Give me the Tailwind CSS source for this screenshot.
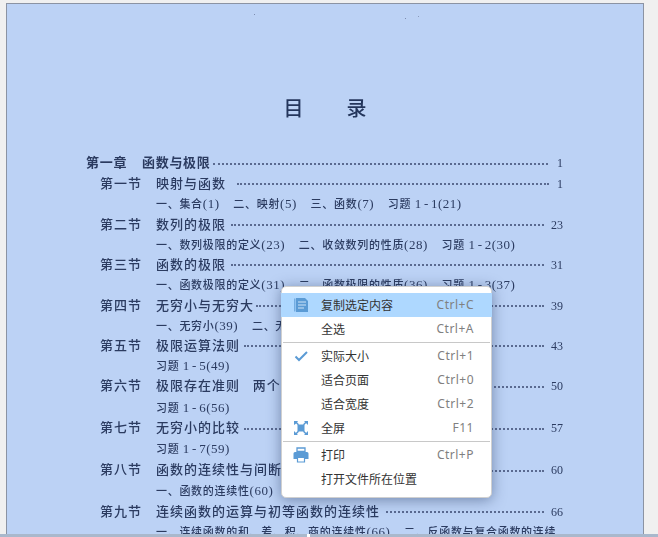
<!DOCTYPE html>
<html lang="zh">
<head>
    <meta charset="UTF-8">
    <title>目录</title>
    <script src="https://cdn.jsdelivr.net/npm/@tailwindcss/browser@4"></script>
</head>
<body class="bg-[#f0f0f0] w-[658px] h-[537px] overflow-hidden relative font-['Liberation_Serif','Noto_Sans_CJK_SC',serif]">
    <!-- scanned page -->
    <div class="ml-[6px] mt-[3px] w-[638px] h-[531px] bg-[#bcd2f5] border-l border-t border-r border-[#8b93a3] overflow-hidden text-[#2b3b60] relative">
        <span class="absolute left-[247px] top-[10px] w-px h-px bg-[#7d8db0]"></span>
        <span class="absolute left-[398px] top-[14px] w-px h-px bg-[#7d8db0]"></span>
        <span class="absolute left-[411px] top-[12px] w-px h-px bg-[#8a9abb]"></span>

        <div class="blur-[0.35px]">
            <div class="flex justify-center gap-[43px] pt-[91px] h-[149px] text-[20px] leading-[28px] font-medium text-[#24365c]">
                <span>目</span>
                <span>录</span>
            </div>

            <div class="pl-[79px] pr-[80px] text-[13px] leading-[20px] tracking-[1px] font-medium">
                <div class="flex h-[21px]"><span class="w-[56px] font-bold tracking-[0.7px]">第一章</span><span class="font-bold tracking-[0.7px]">函数与极限</span><i class="flex-1 self-center ml-[2px] mr-[9px] border-t-2 border-dotted border-[#5a6a90]"></i><span class="w-[6px] text-[12px]">1</span></div>

                <div class="flex h-[20px] pl-[14px]"><span class="w-[56px]">第一节</span><span>映射与函数</span><i class="flex-1 self-center ml-[11px] mr-[8px] border-t-2 border-dotted border-[#5a6a90]"></i><span class="w-[6px] text-[12px]">1</span></div>
                <div class="h-[21px] pl-[70px] text-[11px] tracking-[0.7px]">一、集合<span class="text-[13px] tracking-[0.5px]">(1)</span>&nbsp;&nbsp;&nbsp;&nbsp;二、映射<span class="text-[13px] tracking-[0.5px]">(5)</span>&nbsp;&nbsp;&nbsp;&nbsp;三、函数<span class="text-[13px] tracking-[0.5px]">(7)</span>&nbsp;&nbsp;&nbsp;&nbsp;习题 <span class="text-[13px] tracking-[0.5px] [word-spacing:-1.5px]">1 - 1(21)</span></div>

                <div class="flex h-[20px] pl-[14px]"><span class="w-[56px]">第二节</span><span>数列的极限</span><i class="flex-1 self-center ml-[5px] mr-[7px] border-t-2 border-dotted border-[#5a6a90]"></i><span class="w-[12px] text-[12px] tracking-normal">23</span></div>
                <div class="h-[20px] pl-[70px] text-[11px] tracking-[0.7px]">一、数列极限的定义<span class="text-[13px] tracking-[0.5px]">(23)</span>&nbsp;&nbsp;&nbsp;&nbsp;二、收敛数列的性质<span class="text-[13px] tracking-[0.5px]">(28)</span>&nbsp;&nbsp;&nbsp;&nbsp;习题 <span class="text-[13px] tracking-[0.5px] [word-spacing:-1.5px]">1 - 2(30)</span></div>

                <div class="flex h-[20px] pl-[14px]"><span class="w-[56px]">第三节</span><span>函数的极限</span><i class="flex-1 self-center ml-[5px] mr-[7px] border-t-2 border-dotted border-[#5a6a90]"></i><span class="w-[12px] text-[12px] tracking-normal">31</span></div>
                <div class="h-[21px] pl-[70px] text-[11px] tracking-[0.7px]">一、函数极限的定义<span class="text-[13px] tracking-[0.5px]">(31)</span>&nbsp;&nbsp;&nbsp;&nbsp;二、函数极限的性质<span class="text-[13px] tracking-[0.5px]">(36)</span>&nbsp;&nbsp;&nbsp;&nbsp;习题 <span class="text-[13px] tracking-[0.5px] [word-spacing:-1.5px]">1 - 3(37)</span></div>

                <div class="flex h-[20px] pl-[14px]"><span class="w-[56px]">第四节</span><span>无穷小与无穷大</span><i class="flex-1 self-center ml-[2px] mr-[7px] border-t-2 border-dotted border-[#5a6a90]"></i><span class="w-[12px] text-[12px] tracking-normal">39</span></div>
                <div class="h-[20px] pl-[70px] text-[11px] tracking-[0.7px]">一、无穷小<span class="text-[13px] tracking-[0.5px]">(39)</span>&nbsp;&nbsp;&nbsp;&nbsp;二、无穷大<span class="text-[13px] tracking-[0.5px]">(41)</span></div>

                <div class="flex h-[20px] pl-[14px]"><span class="w-[56px]">第五节</span><span>极限运算法则</span><i class="flex-1 self-center ml-[4px] mr-[7px] border-t-2 border-dotted border-[#5a6a90]"></i><span class="w-[12px] text-[12px] tracking-normal">43</span></div>
                <div class="h-[20px] pl-[70px] text-[11px] tracking-[0.7px]">习题 <span class="text-[13px] tracking-[0.5px] [word-spacing:-1.5px]">1 - 5(49)</span></div>

                <div class="flex h-[22px] pl-[14px]"><span class="w-[56px]">第六节</span><span>极限存在准则&nbsp;&nbsp;&nbsp;两个重要极限</span><i class="flex-1 self-center ml-[4px] mr-[7px] border-t-2 border-dotted border-[#5a6a90]"></i><span class="w-[12px] text-[12px] tracking-normal">50</span></div>
                <div class="h-[20px] pl-[70px] text-[11px] tracking-[0.7px]">习题 <span class="text-[13px] tracking-[0.5px] [word-spacing:-1.5px]">1 - 6(56)</span></div>

                <div class="flex h-[21px] pl-[14px]"><span class="w-[56px]">第七节</span><span>无穷小的比较</span><i class="flex-1 self-center ml-[4px] mr-[7px] border-t-2 border-dotted border-[#5a6a90]"></i><span class="w-[12px] text-[12px] tracking-normal">57</span></div>
                <div class="h-[21px] pl-[70px] text-[11px] tracking-[0.7px]">习题 <span class="text-[13px] tracking-[0.5px] [word-spacing:-1.5px]">1 - 7(59)</span></div>

                <div class="flex h-[21px] pl-[14px]"><span class="w-[56px]">第八节</span><span>函数的连续性与间断点</span><i class="flex-1 self-center ml-[4px] mr-[7px] border-t-2 border-dotted border-[#5a6a90]"></i><span class="w-[12px] text-[12px] tracking-normal">60</span></div>
                <div class="h-[21px] pl-[70px] text-[11px] tracking-[0.7px]">一、函数的连续性<span class="text-[13px] tracking-[0.5px]">(60)</span></div>

                <div class="flex h-[20px] pl-[14px]"><span class="w-[56px]">第九节</span><span>连续函数的运算与初等函数的连续性</span><i class="flex-1 self-center ml-[6px] mr-[7px] border-t-2 border-dotted border-[#5a6a90]"></i><span class="w-[12px] text-[12px] tracking-normal">66</span></div>
                <div class="h-[20px] pl-[70px] text-[11px] tracking-[0.7px] whitespace-nowrap">一、连续函数的和、差、积、商的连续性<span class="text-[13px] tracking-[0.5px]">(66)</span>&nbsp;&nbsp;&nbsp;&nbsp;二、反函数与复合函数的连续</div>
            </div>
        </div>
    </div>

    <!-- bottom strip -->
    <div class="h-[3px] bg-[#a9b8cc]"></div>
    <span class="absolute left-[307px] top-[534px] w-[3px] h-[3px] bg-white"></span>

    <!-- context menu -->
    <div class="absolute left-[281px] top-[286px] w-[211px] h-[212px] pt-[6px] bg-white rounded-[5px] border border-[#d0d0d0] shadow-[0_2px_14px_rgba(40,60,100,0.5)] font-['Noto_Sans_CJK_SC','Noto_Sans',sans-serif] text-[12px] text-[#333]">
        <div class="flex items-center h-[24px] bg-[#aed8ff] -mx-px px-[12px]">
            <svg class="w-[16px] h-[16px]" viewBox="0 0 16 16"><path d="M1 1.500h1.500v13H1z" fill="#5b9bd5" opacity=".7"/><path d="M3 1h9l3 3v11H3z" fill="#5b9bd5"/><path d="M5 5h8M5 8h8M5 11h6" stroke="#cfe4f8" stroke-width="1"/></svg>
            <span class="ml-[12px] flex-1">复制选定内容</span><span class="text-[#808080] pr-[6px] tracking-[0.5px] font-['Noto_Sans']">Ctrl+C</span>
        </div>
        <div class="flex items-center h-[24px] -mx-px px-[12px]">
            <span class="w-[16px]"></span>
            <span class="ml-[12px] flex-1">全选</span><span class="text-[#808080] pr-[6px] tracking-[0.5px] font-['Noto_Sans']">Ctrl+A</span>
        </div>
        <div class="h-px bg-[#c8c8c8] mt-[1px] mb-[1px] mx-[1px]"></div>
        <div class="flex items-center h-[24px] mt-[1px] -mx-px px-[12px]">
            <svg class="w-[16px] h-[16px]" viewBox="0 0 16 16"><path d="M2.500 8.500l3.500 3.500 8-8" fill="none" stroke="#5b9bd5" stroke-width="2"/></svg>
            <span class="ml-[12px] flex-1">实际大小</span><span class="text-[#808080] pr-[6px] tracking-[0.5px] font-['Noto_Sans']">Ctrl+1</span>
        </div>
        <div class="flex items-center h-[24px] -mx-px px-[12px]">
            <span class="w-[16px]"></span>
            <span class="ml-[12px] flex-1">适合页面</span><span class="text-[#808080] pr-[6px] tracking-[0.5px] font-['Noto_Sans']">Ctrl+0</span>
        </div>
        <div class="flex items-center h-[24px] -mx-px px-[12px]">
            <span class="w-[16px]"></span>
            <span class="ml-[12px] flex-1">适合宽度</span><span class="text-[#808080] pr-[6px] tracking-[0.5px] font-['Noto_Sans']">Ctrl+2</span>
        </div>
        <div class="flex items-center h-[24px] -mx-px px-[12px]">
            <svg class="w-[16px] h-[16px]" viewBox="0 0 16 16"><path d="M1 5V1h4L4 2.500 2.500 4zM11 1h4v4l-1-1-1.500-1.500zM15 11v4h-4l1-1 1.500-1.500zM5 15H1v-4l1 1 1.500 1.500z" fill="#5b9bd5"/><path d="M2.500 1.800l3 3M13.500 1.800l-3 3M13.500 14.200l-3-3M2.500 14.200l3-3" stroke="#5b9bd5" stroke-width="1.500"/><rect x="4.500" y="4.500" width="7" height="7" fill="#5b9bd5"/></svg>
            <span class="ml-[12px] flex-1">全屏</span><span class="text-[#808080] pr-[6px] tracking-[0.5px] font-['Noto_Sans']">F11</span>
        </div>
        <div class="h-px bg-[#c8c8c8] mt-[1px] mb-[1px] mx-[1px]"></div>
        <div class="flex items-center h-[24px] mt-[1px] -mx-px px-[12px]">
            <svg class="w-[16px] h-[16px]" viewBox="0 0 16 16"><path d="M4 1h8v3.500H4z" fill="none" stroke="#5b9bd5" stroke-width="1.300"/><path d="M2 5h12a1.500 1.500 0 0 1 1.500 1.500V12H12V10H4v2H.500V6.500A1.500 1.500 0 0 1 2 5z" fill="#5b9bd5"/><path d="M4.500 10.500h7v4.500h-7z" fill="none" stroke="#5b9bd5" stroke-width="1.200"/></svg>
            <span class="ml-[12px] flex-1">打印</span><span class="text-[#808080] pr-[6px] tracking-[0.5px] font-['Noto_Sans']">Ctrl+P</span>
        </div>
        <div class="flex items-center h-[24px] -mx-px px-[12px]">
            <span class="w-[16px]"></span>
            <span class="ml-[12px] flex-1">打开文件所在位置</span>
        </div>
    </div>
</body>
</html>
